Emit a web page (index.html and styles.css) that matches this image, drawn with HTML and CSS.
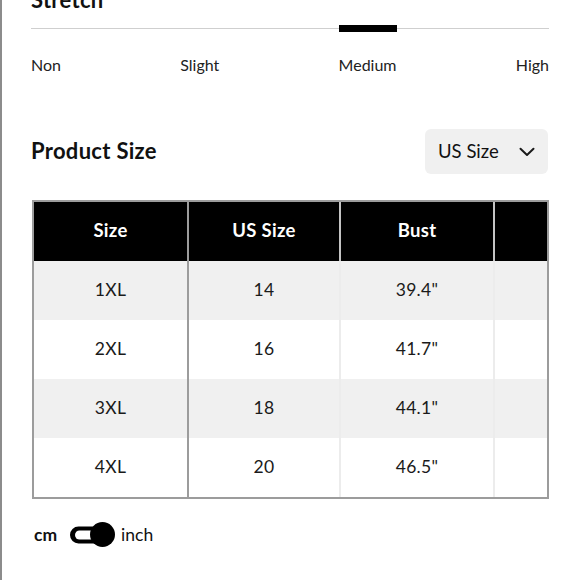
FILE: index.html
```html
<!DOCTYPE html>
<html lang="en">
<head>
<meta charset="utf-8">
<title>Size Guide</title>
<link rel="stylesheet" href="styles.css">
</head>
<body>
<div class="page">
  <h2 class="section-title">Stretch</h2>
  <ul class="stretch-scale">
    <li class="stretch-item">Non</li>
    <li class="stretch-item">Slight</li>
    <li class="stretch-item is-active">Medium</li>
    <li class="stretch-item">High</li>
  </ul>

  <div class="size-head">
    <h2 class="section-title">Product Size</h2>
    <button class="size-select" type="button">
      <span>US Size</span>
      <svg class="chev" width="16" height="10" viewBox="0 0 16 10" aria-hidden="true">
        <path d="M1.5 1.8 L8 8 L14.5 1.8" fill="none" stroke="#1a1a1a" stroke-width="2" stroke-linecap="round" stroke-linejoin="round"/>
      </svg>
    </button>
  </div>

  <div class="table-wrap">
    <table class="size-table">
      <colgroup>
        <col class="c1"><col class="c2"><col class="c3"><col class="c4">
      </colgroup>
      <thead>
        <tr><th>Size</th><th>US Size</th><th>Bust</th><th></th></tr>
      </thead>
      <tbody>
        <tr><td>1XL</td><td>14</td><td>39.4"</td><td></td></tr>
        <tr><td>2XL</td><td>16</td><td>41.7"</td><td></td></tr>
        <tr><td>3XL</td><td>18</td><td>44.1"</td><td></td></tr>
        <tr><td>4XL</td><td>20</td><td>46.5"</td><td></td></tr>
      </tbody>
    </table>
  </div>

  <div class="unit-toggle">
    <span class="unit unit-on">cm</span>
    <svg class="switch" width="45" height="25" viewBox="0 0 45 25" aria-hidden="true">
      <rect x="0" y="4.5" width="34" height="17" rx="8.5" fill="#000"/>
      <rect x="5" y="8.5" width="20" height="9" rx="4.5" fill="#fff"/>
      <circle cx="32.5" cy="12.5" r="12.5" fill="#000"/>
    </svg>
    <span class="unit">inch</span>
  </div>
</div>
</body>
</html>
```

FILE: styles.css
```css
* { box-sizing: border-box; }

html, body {
  margin: 0;
  padding: 0;
  background: #fff;
}

body {
  font-family: "Lato", "Noto Sans", sans-serif;
  color: #1a1a1a;
  overflow: hidden;
}

.page {
  display: flow-root;
  min-height: 580px;
  border-left: 2px solid #8c8c8c;
  padding: 0 31px 0 29px;
}

.section-title {
  margin: 0;
  font-size: 22px;
  line-height: 24px;
  font-weight: 700;
  letter-spacing: 0.3px;
  color: #111;
}

.page > .section-title:first-child {
  margin-top: -12px;
}

/* Stretch scale */
.stretch-scale {
  list-style: none;
  margin: 13px 0 0;
  padding: 0;
  display: flex;
  justify-content: space-between;
  background: linear-gradient(#cfcfcf, #cfcfcf) no-repeat 0 3px / 100% 1px;
}

.stretch-item {
  display: flex;
  flex-direction: column;
  gap: 23px;
  font-size: 16px;
  line-height: 19px;
  color: #222;
}

.stretch-item::before {
  content: "";
  display: block;
  height: 7px;
}

.stretch-item.is-active::before {
  background: #000;
}

/* Product size header */
.size-head {
  margin-top: 55px;
  display: flex;
  align-items: center;
  justify-content: space-between;
}

.size-head .section-title {
  padding-bottom: 2px;
}

.size-select {
  width: 123px;
  height: 45px;
  border: 0;
  border-radius: 6px;
  background: #f0f0f0;
  display: flex;
  align-items: center;
  justify-content: space-between;
  padding: 0 13px 2px 13px;
  font-family: inherit;
  font-size: 18.5px;
  color: #111;
  margin-right: 1px;
}

.chev { display: block; margin-top: 2px; }

/* Table */
.table-wrap {
  margin: 26px 0 0 1px;
  border: 2px solid #9c9c9c;
  overflow: hidden;
}

.size-table {
  width: 615px;
  table-layout: fixed;
  border-collapse: separate;
  border-spacing: 0;
}

.c1 { width: 155px; }
.c2 { width: 152px; }
.c3 { width: 154px; }
.c4 { width: 154px; }

.size-table th,
.size-table td {
  height: 59px;
  padding: 0 0 3px;
  text-align: center;
  vertical-align: middle;
}

.size-table th {
  background: #000;
  color: #fff;
  font-size: 18.5px;
  font-weight: 700;
  letter-spacing: 0.3px;
  border-right: 2px solid #c4c4c4;
}

.size-table td {
  font-size: 17.5px;
  letter-spacing: 0.3px;
  color: #1a1a1a;
  border-right: 2px solid #ececec;
}

.size-table th:first-child,
.size-table td:first-child {
  border-right-color: #9c9c9c;
}

.size-table tbody tr:nth-child(odd) td {
  background: #f0f0f0;
}

/* Unit toggle */
.unit-toggle {
  margin: 23px 0 0 3px;
  display: flex;
  align-items: center;
}

.unit {
  font-size: 17.5px;
  line-height: 25px;
  color: #111;
}

.unit-on {
  font-weight: 700;
  font-size: 17.5px;
  margin-right: 13px;
}

.switch {
  display: block;
  margin-right: 6px;
}
```
